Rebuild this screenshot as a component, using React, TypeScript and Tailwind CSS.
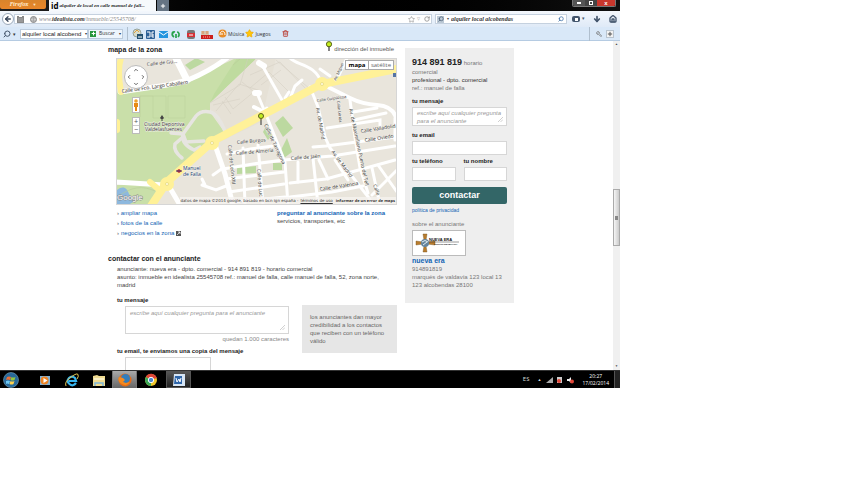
import type { ReactNode } from "react";
import {
  ArrowDown,
  ArrowLeft,
  ChevronDown,
  ChevronLeft,
  ChevronRight,
  ChevronUp,
  Home,
  Plus,
  RotateCw,
  Search,
  Star,
  Trash2,
  Wrench,
} from "lucide-react";

const inputClass =
  "block w-full border border-[#d6d6d6] bg-white px-1 text-[6px] leading-[8px] outline-none placeholder:italic placeholder:text-[#999]";

function PinIcon() {
  return (
    <svg viewBox="0 0 8 11" className="h-[11px] w-2 shrink-0">
      <path d="M4 5v5" stroke="#333" strokeWidth="1.2" />
      <circle cx="4" cy="3.2" r="2.6" fill="#c4ee1e" stroke="#555d1c" strokeWidth="1" />
    </svg>
  );
}

function Grip() {
  return (
    <svg viewBox="0 0 5 5" className="absolute right-1 bottom-1 size-[5px]">
      <path d="M0 5l5-5M2.5 5L5 2.5" stroke="#bbb" strokeWidth=".7" />
    </svg>
  );
}

function TitleBar() {
  return (
    <div className="flex h-[11px] items-start bg-linear-to-r from-[#222] via-black to-[#111]">
      <button className="flex h-[9px] w-[46px] items-center justify-center gap-1 rounded-b-xs bg-linear-to-b from-[#d9842b] to-[#e8862a] font-serif text-[6px] leading-none font-bold text-[#ffe7c4] italic">
        Firefox <span className="text-[4px] not-italic">▼</span>
      </button>
      <div className="ml-[3px] flex h-[11px] w-[107px] items-center gap-px bg-[#f6f9fc] pl-[2px] whitespace-nowrap">
        <b className="font-['Open_Sans',sans-serif] text-[8px] leading-[11px] text-black">id</b>
        <span className="font-['Liberation_Serif',serif] text-[5px] leading-[8px] font-bold text-[#222] italic">
          alquiler de local en calle manuel de fall...
        </span>
      </div>
      <button
        aria-label="Nueva pestaña"
        className="ml-px flex h-[11px] w-3 items-center justify-center bg-[#667483] text-white"
      >
        <Plus size={6} strokeWidth={4} />
      </button>
      <div className="mr-1 ml-auto flex h-[7px] overflow-hidden rounded-b-xs border border-t-0 border-[#777] text-white">
        <button aria-label="Minimizar" className="flex w-3 items-center justify-center bg-[#555]">
          <span className="h-[2px] w-1 bg-white" />
        </button>
        <button aria-label="Restaurar" className="flex w-3 items-center justify-center bg-[#444]">
          <span className="size-1 border border-white" />
        </button>
        <button aria-label="Cerrar" className="flex w-[18px] items-center justify-center bg-[#c8372d] text-[6px] leading-none font-bold">
          x
        </button>
      </div>
    </div>
  );
}

function NavBar() {
  return (
    <div className="flex h-4 items-center bg-linear-to-b from-[#f3f7fc] to-[#dfeaf7] pr-[3px] pl-[2px] font-['Liberation_Serif',serif] italic">
      <button aria-label="Atrás" className="z-10 flex size-3 items-center justify-center rounded-full border border-[#9aa9ba] bg-white text-[#37455a]">
        <ArrowLeft size={8} strokeWidth={4} />
      </button>
      <div className="flex h-[10px] flex-1 items-center border border-[#c5d1df] bg-white pl-[2px] text-[#888]">
        <svg viewBox="0 0 7 7" className="size-[7px]">
          <path d="M0 0h2v1h3V0h2v7H0z" fill="#888" />
          <path d="M1 3h5M1 5h5" stroke="#aaa" />
        </svg>
        <svg viewBox="0 0 7 7" className="ml-[6px] size-[7px]">
          <circle cx="3.5" cy="3.5" r="3" fill="#ccc" stroke="#888" />
          <path d="M1 2h5M1 5h5M3.5 0v7" stroke="#999" strokeWidth=".6" />
        </svg>
        <a href="#url" className="ml-[2px] flex-1 text-[6px] leading-none whitespace-nowrap text-[#888]">
          www.<b className="text-[#333]">idealista.com</b>/inmueble/25545708/
        </a>
        <Star size={7} className="mr-[2px]" />
        <span className="mr-1 text-[4px] not-italic">▽</span>
        <RotateCw size={6} strokeWidth={3} className="mr-px" />
      </div>
      <div className="ml-[3px] flex h-[10px] w-[132px] items-center border border-[#c5d1df] bg-white">
        <span className="mx-px flex size-[7px] items-center justify-center bg-[#bcc9d6]">
          <Search size={6} strokeWidth={3} className="-scale-x-100 text-[#4d6076]" />
        </span>
        <span className="mx-[2px] text-[4px] text-[#444] not-italic">▾</span>
        <input
          aria-label="Buscar en la web"
          defaultValue="alquiler local alcobendas"
          className="w-full min-w-0 flex-1 text-[6px] leading-none font-bold text-[#333] italic outline-none"
        />
        <Search size={6} strokeWidth={3} className="mr-[2px] -scale-x-100 text-[#3b6ea5]" />
      </div>
      <span className="ml-[5px] flex h-[6px] w-2 items-center justify-center rounded-xs bg-[#43556c]">
        <span className="size-[3px] bg-white" />
      </span>
      <span className="ml-[2px] text-[5px] text-[#43556c] not-italic">▾</span>
      <ArrowDown size={8} strokeWidth={5} className="ml-2 text-[#43556c]" />
      <Home size={8} strokeWidth={4} className="ml-2 text-[#43556c]" />
    </div>
  );
}

function Toolbar() {
  return (
    <div className="flex h-[14px] items-center border-b border-[#b5cbe2] bg-[#d9e8f8] pl-[3px] font-['Open_Sans',sans-serif] text-[5px] text-[#333]">
      <Search size={8} strokeWidth={3} className="-scale-x-100 text-[#45566b]" />
      <span className="ml-[2px] text-[5px]">▾</span>
      <div className="ml-1 flex h-[10px] w-[68px] items-center border border-[#bccbdc] bg-white pl-px">
        <input
          aria-label="Término de búsqueda"
          defaultValue="alquiler local alcobend"
          className="w-full min-w-0 flex-1 font-['Liberation_Sans',sans-serif] text-[6px] leading-none text-[#222] outline-none"
        />
        <span className="text-[4px]">▾</span>
      </div>
      <button className="flex h-[10px] w-[35px] items-center gap-[3px] border border-[#bccbdc] bg-[#eef5fc] pl-px leading-none">
        <span className="flex size-[6px] items-center justify-center bg-[#27963c] text-white">
          <Plus size={5} strokeWidth={5} />
        </span>
        Buscar <span className="ml-auto pr-px text-[4px]">▾</span>
      </button>
      <span className="ml-1 h-[14px] w-px bg-[#b0bfce]" />
      <svg viewBox="0 0 150 12" className="ml-1 h-3 w-[85px]" preserveAspectRatio="xMinYMid slice">
        <circle cx="5" cy="5" r="4" fill="#d8dccb" stroke="#98a39b" />
        <path d="M2 5l3-3 2 2" stroke="#e0a23e" fill="none" />
        <rect x="5" y="6" width="6" height="5" fill="#23506f" />
        <path d="M6 9h4" stroke="#fff" />
        <rect x="14" y="2" width="9" height="9" rx="1" fill="#2d6197" />
        <path d="M15 4h3v5h-3M22 4h-2v5h2M20 7h2" stroke="#fff" fill="none" />
        <rect x="27" y="3" width="9" height="7" fill="#2495df" />
        <path d="M27 4l4.500 3L36 4" stroke="#fff" fill="none" />
        <path d="M42 9c-3-2-2-6 1-5m3 5c2-2 1-5-1-5m-5 2l2-2m2 6V6" stroke="#27a34a" strokeWidth="1.700" fill="none" />
        <rect x="55" y="2" width="8" height="9" rx="2" fill="#777" />
        <rect x="55" y="5" width="8" height="4" fill="#d53136" />
        <path d="M57 7h4" stroke="#fff" />
        <path d="M69 3h8v4h-8z" fill="#d7c3a9" />
        <path d="M71 3v3m4-3v3" stroke="#d98554" />
        <rect x="69" y="7" width="12" height="4" fill="#cc211d" />
        <path d="M71 9h8" stroke="#ffaaa5" strokeDasharray="1 1" />
      </svg>
      <svg viewBox="0 0 9 9" className="ml-px size-[9px]">
        <circle cx="4.500" cy="4.500" r="4" fill="#e88c27" />
        <path d="M2 6c0-5 5-5 5 0M4 6V4" stroke="#fff" fill="none" />
      </svg>
      <span className="ml-px">Música</span>
      <Star size={9} className="ml-px fill-[#ffc60b] text-[#eeaa08]" />
      <span className="ml-px">Juegos</span>
      <Trash2 size={7} strokeWidth={3} className="ml-[11px] text-[#bd4b43]" />
      <span className="ml-auto h-[14px] w-px bg-[#b0bfce]" />
      <Wrench size={6} strokeWidth={3} className="ml-[6px] -scale-x-100 text-[#777]" />
      <button aria-label="Añadir" className="mr-[6px] ml-[4px] flex size-2 items-center justify-center border border-[#b9c4cf] bg-[#f3f3f3] text-[#555]">
        <Plus size={6} strokeWidth={4} />
      </button>
    </div>
  );
}

const thinRoads = [
  "M146 7L166 42",
  "M151 50L146 54M173 34L169 40M175 38l4-10 7-6",
  "M174 0C181 8 199 5 206 26",
  "M141 35L151 59L169 104L172 147",
  "M194 29L202 49L209 79L214 90L253 140L257 147",
  "M234 42L239 80L244 110L252 135",
  "M231 0L222 19L214 26",
  "M204 11L214 18",
  "M211 70L264 62V70",
  "M197 89L210 88L279 79",
  "M237 54L261 50M238 62L270 55",
  "M107 111L137 106L168 102L216 98L279 88",
  "M110 121L168 114M174 125L210 121L279 102",
  "M113 134L168 126M118 144L169 139",
  "M174 139L216 134L247 128",
  "M182 104V124M197 100L202 147M203 102L212 121",
  "M142 87L147 147M127 90L129 147",
  "M97 117L107 110L102 94M86 127l14 5 10-4M89 127l-3-6",
  "M111 96L134 91L157 88",
  "M256 110L264 147M262 107L281 134M281 112L256 137M279 60V82",
  "M219 102L232 122",
];

const mapLabels: { text: string; x: number; y: number; rotate?: number; small?: boolean }[] = [
  { text: "Calle de Gu...", x: 31, y: 8, rotate: -6 },
  { text: "Calle de Fco. Largo Caballero", x: 6, y: 35, rotate: -8 },
  { text: "Ciudad Deportiva", x: 28, y: 68 },
  { text: "Valdelasfuentes", x: 29, y: 73 },
  { text: "Calle Burgos", x: 121, y: 86, rotate: -5 },
  { text: "Calle de Almería", x: 120, y: 97, rotate: -5 },
  { text: "Calle de León XIII", x: 112, y: 87, rotate: 84 },
  { text: "Calle de Luc", x: 141, y: 111, rotate: 85 },
  { text: "Calle de Tarragona", x: 148, y: 67, rotate: 65 },
  { text: "Calle de Jaén", x: 175, y: 102, rotate: -5 },
  { text: "Av. de Madrid", x: 200, y: 50, rotate: 80 },
  { text: "Av. de Madrid", x: 215, y: 94, rotate: 53 },
  { text: "Av. de Maximiliano Puerto del Tell", x: 233, y: 51, rotate: 78 },
  { text: "Av. Miguel", x: 220, y: 23, rotate: -66, small: true },
  { text: "Calle Guipúzcoa", x: 201, y: 44, rotate: -8, small: true },
  { text: "Calle Lérida", x: 221, y: 43, rotate: 84, small: true },
  { text: "Calle Valladolid", x: 245, y: 75, rotate: -9 },
  { text: "Calle Oviedo", x: 249, y: 84, rotate: -9 },
  { text: "Calle de Valencia", x: 204, y: 133, rotate: -9 },
  { text: "Calle", x: 257, y: 127, rotate: 70 },
];

function StreetMap() {
  return (
    <svg viewBox="0 0 281 147" className="block w-full" fontFamily="Open Sans, sans-serif">
      <rect width="281" height="147" fill="#e9e5dc" />
      <path d="M0 33L38 30L72 25L101 9L120 0H141L94 45V54L109 75L96 87L51 126L0 122Z" fill="#c9dfa9" />
      <path d="M121 0h20L94 45l4-9z" fill="#bfdb9f" />
      <path d="M94 51L110 76L97 87L145 64L160 0H141L94 45z" fill="#e6e1d6" />
      <path d="M0 127h42l8 4-16 16H0z" fill="#c9dfa9" />
      <path d="M0 133c6-6 11-4 13 3l6 7-7 4H0z" fill="#8db8de" />
      <g fill="#bcd9a0">
        <path d="M69 7L80 0L89 4L74 12z" />
        <path d="M159 65L167 58L177 70L167 79z" />
        <path d="M164 94L171 80L176 94L168 100z" />
        <path d="M149 70l7 7-4 5-5-8z" />
        <path d="M157 105h9v7h-9zM121 110l19-2v7l-19 1z" />
      </g>
      <g fill="none" stroke="#d2ccc0" strokeWidth=".5">
        <path d="M94 45l30-18 8-27M100 53l23-27 22 7M109 39l8 12 22-18M106 43l9 13M126 24l17 14M97 47l27-6" />
        <path d="M134 17l30-13 28 29M134 30l19-16 20 20M160 2l34 29M145 27l20-15" />
        <path d="M37 38v22h13V38zM52 38v22h17V38z" stroke="#b9cc99" />
      </g>
      <path d="M125 0l-8 7M0 140c12-9 23-14 39-7M24 59v-21h13" fill="none" stroke="#b9cc99" strokeWidth=".6" />
      <g fill="none" stroke="#fff" strokeLinecap="round">
        <path d="M4 34L51 27L72 22Q94 13 111 0" strokeWidth="5" />
        <path d="M60 0L71 22" strokeWidth="7" />
        <path d="M0 124L48 127M54 130L64 147" strokeWidth="5" />
        <path d="M99 87L109 116L117 147" strokeWidth="5" />
        <path d="M206 26Q222 34 234 40T261 47T280 59" strokeWidth="4" />
        <path d="M139 35h4M143 5l5 3" strokeWidth="6" />
        <g strokeWidth="3">
          {thinRoads.map((d) => (
            <path key={d} d={d} />
          ))}
        </g>
        <path d="M138 49l8 4" strokeWidth="4" />
      </g>
      <g fill="none" stroke="#e7e5e1" strokeLinecap="round" strokeWidth="3.500">
        <path d="M110 76Q103 56 94 54T80 58L67 76Q65 86 78 92L84 89" />
        <path d="M55 75l12 1 3 8 18-1M67 79L59 86Q57 93 66 100" />
      </g>
      <g fill="none" stroke="#fff198" strokeLinecap="round">
        <path d="M33 151L51 124L97 83L206 26L281 11" strokeWidth="8" />
        <path d="M5 0Q1 12 5 34M1 64v8M34 124l7 6" strokeWidth="6" />
      </g>
      <g fill="#fff198">
        <circle cx="51" cy="126" r="7" />
        <circle cx="96" cy="85" r="7" />
        <circle cx="206" cy="26" r="7" />
      </g>
      <g fill="#fffbe0" stroke="#ddd06f" strokeWidth=".6">
        <circle cx="51" cy="126" r="1.500" />
        <circle cx="96" cy="85" r="1.500" />
        <circle cx="206" cy="26" r="1.500" />
      </g>
      <g fill="#333" stroke="#f5f3ee" strokeWidth=".8" paintOrder="stroke">
        {mapLabels.map((l) => (
          <text
            key={l.text + l.x}
            fontSize={l.small ? 4 : 5}
            transform={`translate(${l.x} ${l.y}) rotate(${l.rotate ?? 0})`}
          >
            {l.text}
          </text>
        ))}
        <text x="67" y="112" fontSize="5" fill="#153c70">Manuel</text>
        <text x="67" y="118" fontSize="5" fill="#153c70">de Falla</text>
      </g>
      <path d="M46 57l2 3-1 1h-2l-1-1z" fill="#444" />
      <path d="M46 60v3" stroke="#444" />
      <path d="M60 113l3-2 3 2-3 2z" fill="#c22c36" />
      <path d="M60 113h6" stroke="#23498c" strokeWidth=".8" />
      <rect x="64" y="139" width="217" height="8" fill="#f5f3f0" opacity=".75" />
      <text x="1" y="142" fontSize="8" fontFamily="Liberation Sans, sans-serif" fill="#fff" stroke="#888" strokeWidth="1" paintOrder="stroke">
        Google
      </text>
      <path d="M145 61v6" stroke="#333" />
      <circle cx="145" cy="58" r="2.500" fill="#c4ee1e" stroke="#555d1c" />
      <rect x="277" y="15" width="4" height="4" fill="#5474a4" />
      <rect x=".5" y=".5" width="280" height="146" fill="none" stroke="#d6d6d6" />
    </svg>
  );
}

function MapPanel() {
  return (
    <div className="relative ml-2">
      <StreetMap />
      <button aria-label="Desplazar mapa" className="absolute top-[7px] left-[8px] size-6 rounded-full border border-[#bbb] bg-white text-[#666]">
        <ChevronUp size={6} strokeWidth={4} className="absolute top-px left-2" />
        <ChevronDown size={6} strokeWidth={4} className="absolute bottom-px left-2" />
        <ChevronLeft size={6} strokeWidth={4} className="absolute top-2 left-px" />
        <ChevronRight size={6} strokeWidth={4} className="absolute top-2 right-px" />
      </button>
      <button aria-label="Street View" className="absolute top-[39px] left-[16px] flex h-4 w-2 items-center justify-center border border-[#bbb] bg-white">
        <svg viewBox="0 0 6 12" className="h-3 w-[6px]">
          <circle cx="3" cy="2" r="1.800" fill="#efa12c" />
          <path d="M1 4h4v4H4v4H2V8H1z" fill="#e68a17" />
        </svg>
      </button>
      <div className="absolute top-[59px] left-[16px] flex w-2 flex-col border border-[#bbb] bg-white text-center text-[7px] leading-[7px] text-[#555]">
        <button aria-label="Acercar">+</button>
        <button aria-label="Alejar" className="border-t border-[#ccc]">−</button>
      </div>
      <div className="absolute top-[2px] right-[3px] flex h-[10px] border border-[#aaa] bg-white font-['Open_Sans',sans-serif] text-[6px] leading-[8px]">
        <button className="w-[22px] font-bold text-black">mapa</button>
        <button className="w-[25px] border-l border-[#aaa] text-[#666]">satélite</button>
      </div>
      <p className="absolute right-[2px] bottom-px flex gap-[2px] font-['DejaVu_Sans',sans-serif] text-[4px] leading-[6px] whitespace-nowrap text-[#333]">
        <span>datos de mapa ©2014 google, basado en bcn ign españa -</span>
        <a href="#terminos" className="underline">términos de uso</a>
        <a href="#error" className="pl-px font-['Open_Sans',sans-serif] font-bold">informar de un error de maps</a>
      </p>
    </div>
  );
}

function MainColumn() {
  return (
    <main className="min-w-0 flex-1">
      <div className="flex h-[17px] items-start justify-between pr-[3px]">
        <h2 className="pt-[5px] text-[7px] leading-[8px] font-bold text-[#222]">mapa de la zona</h2>
        <span className="flex items-start gap-px text-[#555]">
          <PinIcon />
          <span className="pt-1">dirección del inmueble</span>
        </span>
      </div>
      <MapPanel />
      <div className="flex pt-[3px] pl-[9px]">
        <ul className="flex-1 leading-[10px] text-[#1264b4]">
          <li><span className="text-[#555]">›</span> <a href="#ampliar">ampliar mapa</a></li>
          <li><span className="text-[#555]">›</span> <a href="#fotos">fotos de la calle</a></li>
          <li className="flex items-center gap-[2px]">
            <span className="text-[#555]">›</span> <a href="#negocios">negocios en la zona</a>
            <svg viewBox="0 0 5 5" className="size-[5px]">
              <rect width="5" height="5" fill="#555" />
              <path d="M1 4l3-3M2 1h2v2" stroke="#fff" strokeWidth=".7" fill="none" />
            </svg>
          </li>
        </ul>
        <p className="w-[120px] pt-px text-[#444]">
          <a href="#preguntar" className="block font-bold whitespace-nowrap text-[#1264b4]">
            preguntar al anunciante sobre la zona
          </a>
          servicios, transportes, etc
        </p>
      </div>

      <h2 className="mt-[17px] text-[7px] leading-[8px] font-bold text-[#222]">contactar con el anunciante</h2>
      <p className="mt-[2px] ml-[9px] text-[#444]">
        anunciante: nueva era - dpto. comercial - 914 891 819 - horario comercial
        <br />
        asunto: inmueble en idealista 25545708 ref.: manuel de falla, calle manuel de falla, 52, zona norte, madrid
      </p>
      <div className="mt-[7px] ml-[9px] flex items-start">
        <form className="w-[172px] text-[#222]">
          <label htmlFor="mensaje" className="block font-bold">tu mensaje</label>
          <div className="relative mt-[2px] ml-2">
            <textarea id="mensaje" placeholder="escribe aquí cualquier pregunta para el anunciante" className={`${inputClass} h-7 resize-none pt-[2px]`} />
            <Grip />
          </div>
          <p className="pt-px text-right text-[#888]">quedan 1.000 caracteres</p>
          <label htmlFor="email" className="mt-1 block font-bold">tu email, te enviamos una copia del mensaje</label>
          <div className="mt-[2px] mr-[78px] ml-2">
            <input id="email" type="email" className={`${inputClass} h-[14px]`} />
          </div>
        </form>
        <p className="mt-[9px] ml-auto h-12 w-[95px] bg-[#e6e6e6] pt-2 pl-2 text-[#666]">
          los anunciantes dan mayor
          <br />
          credibilidad a los contactos
          <br />
          que reciben con un teléfono
          <br />
          válido
        </p>
      </div>
    </main>
  );
}

function Sidebar() {
  return (
    <aside className="mt-[7px] h-[255px] w-[109px] bg-[#eee] px-[7px] pt-[9px] text-[#777]">
      <p>
        <b className="text-[9px] leading-[11px] text-[#222]">914 891 819</b> horario
        <br />
        comercial
        <br />
        <span className="text-[#333]">profesional - dpto. comercial</span>
        <br />
        ref.: manuel de falla
      </p>
      <form className="mt-[5px] text-[#222]">
        <label htmlFor="side-mensaje" className="block font-bold">tu mensaje</label>
        <div className="relative mt-[2px]">
          <textarea id="side-mensaje" placeholder="escribe aquí cualquier pregunta para el anunciante" className={`${inputClass} h-[19px] resize-none overflow-hidden pt-px`} />
          <Grip />
        </div>
        <label htmlFor="side-email" className="mt-[5px] block font-bold">tu email</label>
        <input id="side-email" type="email" className={`${inputClass} mt-[2px] h-[14px]`} />
        <div className="mt-[2px] grid grid-cols-2 gap-2">
          <div>
            <label htmlFor="telefono" className="block font-bold">tu teléfono</label>
            <input id="telefono" type="tel" className={`${inputClass} mt-[2px] h-[14px]`} />
          </div>
          <div>
            <label htmlFor="nombre" className="block font-bold">tu nombre</label>
            <input id="nombre" type="text" className={`${inputClass} mt-[2px] h-[14px]`} />
          </div>
        </div>
        <button type="button" className="mt-[6px] block h-[17px] w-full rounded-xs bg-[#336667] text-[9px] leading-none font-bold text-white">
          contactar
        </button>
      </form>
      <a href="#privacidad" className="mt-[2px] block text-[5px] text-[#1264b4]">política de privacidad</a>
      <p className="mt-[6px]">sobre el anunciante</p>
      <div className="mt-[2px] w-[54px] border border-[#bbb] bg-white">
        <svg viewBox="0 0 52 24" className="block w-full">
          <path d="M10 3h4l-1 6h-2zM10 21h4l-1-6h-2zM3 10v4l7-1v-2zM22 10v4l-8-1v-2z" fill="#b97c2c" stroke="#74501f" strokeWidth=".4" />
          <circle cx="12" cy="12" r="4" fill="#66859e" />
          <path d="M9 11q3-3 6 0M10 14l4-3" stroke="#e1edf3" fill="none" />
          <g fontFamily="Liberation Sans, sans-serif" fontWeight="bold" fill="#151515">
            <text x="16" y="10" fontSize="4">NUEVA ERA</text>
            <text x="21" y="14" fontSize="2">GESTIÓN INMOBILIARIA</text>
          </g>
          <path d="M16 11h30" stroke="#333" strokeWidth=".5" />
        </svg>
      </div>
      <p className="mt-px whitespace-nowrap">
        <a href="#nueva-era" className="block text-[7px] font-bold text-[#1264b4]">nueva era</a>
        914891819
        <br />
        marqués de valdavía 123 local 13
        <br />
        123 alcobendas 28100
      </p>
    </aside>
  );
}

function ScrollBar() {
  return (
    <div className="flex w-[7px] flex-col items-center justify-between bg-[#f0f0f0] text-[3px] leading-[7px] text-[#444]">
      <span>▲</span>
      <span className="mt-6 flex h-[57px] w-[7px] items-center justify-center border border-[#aaa] bg-linear-to-r from-[#f5f5f5] to-[#ccc]">
        <span className="h-1 w-[3px] bg-[#888]" />
      </span>
      <span>▼</span>
    </div>
  );
}

function TaskButton({ label, active, children }: { label: string; active?: boolean; children: ReactNode }) {
  return (
    <button
      aria-label={label}
      className={`flex h-full items-center justify-center ${active ? "w-[25px] border-x border-[#777] bg-linear-to-b from-[#aaa] to-[#666]" : "w-[27px]"}`}
    >
      <svg viewBox="0 0 14 14" className="size-[14px]">{children}</svg>
    </button>
  );
}

function TaskBar() {
  return (
    <div className="flex h-[18px] items-center border-t border-[#333] bg-black font-['Open_Sans',sans-serif] text-[5px] leading-[7px] text-[#ddd]">
      <button aria-label="Inicio" className="ml-[3px] size-4">
        <svg viewBox="0 0 16 16" className="size-4">
          <circle cx="8" cy="8" r="7.500" fill="#28699a" stroke="#7ba6be" strokeWidth=".6" />
          <path d="M4 5q2-1 4 0l-1 3q-2-1-4 0z" fill="#ed6f36" />
          <path d="M8.500 5q2 1 4 0l-1 3q-2 1-4 0z" fill="#95c83d" />
          <path d="M3 9q2-1 4 0l-1 3q-2-1-3 0z" fill="#6dc7f2" />
          <path d="M7.500 9q2 1 4 0l-1 3q-2 1-4 0z" fill="#ffd34d" />
        </svg>
      </button>
      <div className="ml-3 flex h-full">
        <TaskButton label="Reproductor">
          <rect x="2" y="3" width="10" height="9" fill="#83b3d6" />
          <circle cx="6.500" cy="7.500" r="4" fill="#ee8424" />
          <path d="M5.500 5l4 2.500-4 2.500z" fill="#fff" />
        </TaskButton>
        <TaskButton label="Internet Explorer">
          <path d="M11 10Q8 14 4.500 11T4 5t6 0l1 3H4" fill="none" stroke="#37b5ef" strokeWidth="2.200" />
          <path d="M1 13Q-1 9 6 4t7-2q1 1-1 4" fill="none" stroke="#e4c650" />
        </TaskButton>
        <TaskButton label="Explorador">
          <path d="M1 3l4-1 2 1h6v10H1z" fill="#efdb91" />
          <path d="M2 5h10v2H2z" fill="#f9f0c6" />
          <path d="M3 13v-3h8v3" fill="none" stroke="#7eb6d9" strokeWidth="1.500" />
        </TaskButton>
        <TaskButton label="Firefox" active>
          <circle cx="7" cy="7" r="6.500" fill="#e56b16" />
          <circle cx="7.500" cy="5.500" r="4.500" fill="#337dbc" />
          <path d="M1 4l4 1 2 2-2 2 3 1 4-1q-3 5-8 2T1 4" fill="#f48a1f" />
        </TaskButton>
        <TaskButton label="Chrome">
          <circle cx="7" cy="7" r="6" fill="#efc72c" />
          <path d="M7 7L1.800 4A6 6 0 0 1 12.800 5z" fill="#dc4636" />
          <path d="M7 7L1.800 4A6 6 0 0 0 7 13z" fill="#3aa757" />
          <circle cx="7" cy="7" r="2.700" fill="#4b86cf" stroke="#fff" />
        </TaskButton>
        <button aria-label="Word" className="ml-[2px] flex h-full w-[25px] items-center justify-center border border-[#555] bg-linear-to-b from-[#555] to-[#222]">
          <svg viewBox="0 0 14 14" className="size-[14px]">
            <path d="M2 1h11v12H1z" fill="#d6e5f5" />
            <path d="M3 3h7v8H2z" fill="#2e65a9" />
            <path d="M4 5l1 4 2-3 1 3 1-4" fill="none" stroke="#fff" />
          </svg>
        </button>
      </div>
      <span className="ml-auto text-[6px]">ES</span>
      <span className="ml-2 text-[4px]">▲</span>
      <svg viewBox="0 0 28 8" className="ml-[5px] h-2 w-7">
        <path d="M0 7h7V1z" fill="#aaa" />
        <path d="M11 1h5v6h-5z" fill="#ccc" />
        <circle cx="13" cy="5" r="2" fill="#e34638" />
        <path d="M21 3h2l2-2v6l-2-2h-2z" fill="#eee" />
        <circle cx="26" cy="5.500" r="2" fill="#e34638" />
      </svg>
      <p className="ml-2 text-center text-white">
        20:27
        <br />
        17/02/2014
      </p>
      <span className="ml-[5px] h-full w-[6px] border-l border-[#555] bg-[#222]" />
    </div>
  );
}

export default function App() {
  return (
    <div className="min-h-screen bg-white font-['Liberation_Sans',Arial,sans-serif] text-[6px] leading-[8px]">
      <div className="w-full max-w-[620px]">
        <TitleBar />
        <NavBar />
        <Toolbar />
        {/* page viewport, the form is cut off by the bottom edge */}
        <div className="flex h-[329px] overflow-hidden bg-white">
          <div className="flex min-w-0 flex-1 items-start gap-2 pr-[99px] pl-[108px]">
            <MainColumn />
            <Sidebar />
          </div>
          <ScrollBar />
        </div>
        <TaskBar />
      </div>
    </div>
  );
}
